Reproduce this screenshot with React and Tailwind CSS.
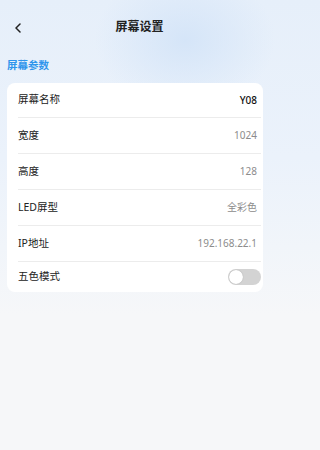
import React from "react";

const rows = [
  { label: "屏幕名称", value: "Y08", dark: true, h: "h-[35px]" },
  { label: "宽度", value: "1024", h: "h-[36px]" },
  { label: "高度", value: "128", h: "h-[36px]" },
  { label: "LED屏型", value: "全彩色", h: "h-[36px]" },
  { label: "IP地址", value: "192.168.22.1", h: "h-[36px]" },
];

export default function App() {
  return (
    <div
      className="w-full min-w-[270px] h-[450px] overflow-hidden bg-[#f6f7f9] bg-[radial-gradient(ellipse_90px_70px_at_185px_40px,#d5e5f8_0%,rgba(213,229,248,0)_100%),linear-gradient(180deg,#e6effa_0%,#ebf2fb_35%,#f1f5fa_55%,#f6f7f9_70%)]"
      style={{ fontFamily: '"Noto Sans", "Noto Sans CJK SC", sans-serif' }}
    >
      <div className="w-[270px]">
        <div className="relative flex h-[54px] items-center justify-center pl-[9px]">
          <svg
            className="absolute left-[14px] top-[23px]"
            width="8"
            height="10"
            viewBox="0 0 8 10"
            fill="none"
          >
            <path d="M6 1L2 5L6 9" stroke="#222" strokeWidth="1.5" strokeLinecap="round" strokeLinejoin="round" />
          </svg>
          <span className="text-[12px] font-semibold text-[#222]">屏幕设置</span>
        </div>
        <div className="flex h-[24px] items-center pl-[7px] text-[10.5px] font-semibold text-[#2f95ec]">
          屏幕参数
        </div>
        <div className="mx-[7px] mt-[5px] rounded-[8px] bg-white pl-[11px]">
          {rows.map((r) => (
            <div
              key={r.label}
              className={`flex ${r.h} items-center justify-between border-b border-[#ececec] mr-[2px] pr-[4px]`}
            >
              <span className="text-[10.5px] text-[#222]">{r.label}</span>
              <span className={`text-[10px] ${r.dark ? "text-[#111] font-medium" : "text-[#8c8c8c]"}`}>{r.value}</span>
            </div>
          ))}
          <div className="flex h-[30px] items-center justify-between pr-[2px]">
            <span className="text-[10.5px] text-[#222]">五色模式</span>
            <div className="flex h-[16px] w-[33px] items-center rounded-full bg-[#d3d3d3] px-[1px]">
              <div className="h-[14px] w-[14px] rounded-full bg-white shadow-[0_0_1px_rgba(0,0,0,0.3)]" />
            </div>
          </div>
        </div>
      </div>
    </div>
  );
}
